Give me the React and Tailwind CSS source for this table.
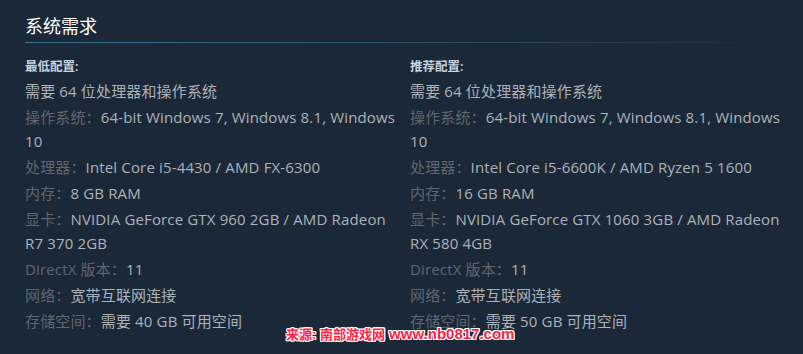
import React from 'react'

const minimum = [
  ['操作系统：', '64-bit Windows 7, Windows 8.1, Windows 10'],
  ['处理器：', 'Intel Core i5-4430 / AMD FX-6300'],
  ['内存：', '8 GB RAM'],
  ['显卡：', 'NVIDIA GeForce GTX 960 2GB / AMD Radeon R7 370 2GB'],
  ['DirectX 版本：', '11'],
  ['网络：', '宽带互联网连接'],
  ['存储空间：', '需要 40 GB 可用空间'],
]

const recommended = [
  ['操作系统：', '64-bit Windows 7, Windows 8.1, Windows 10'],
  ['处理器：', 'Intel Core i5-6600K / AMD Ryzen 5 1600'],
  ['内存：', '16 GB RAM'],
  ['显卡：', 'NVIDIA GeForce GTX 1060 3GB / AMD Radeon RX 580 4GB'],
  ['DirectX 版本：', '11'],
  ['网络：', '宽带互联网连接'],
  ['存储空间：', '需要 50 GB 可用空间'],
]

function ReqColumn({ title, rows }) {
  return (
    <div className="w-[375px]">
      <div className="mt-[14px] text-[12.5px] leading-[20px] font-semibold text-[#c6d4df]">{title}</div>
      <ul className="mt-[2px] text-[15px] leading-[24px] tracking-[0.15px] text-[#acb2b8]">
        <li className="mb-[2px]">需要 64 位处理器和操作系统</li>
        {rows.map(([label, value]) => (
          <li key={label} className="mb-[2px]">
            <span className="text-[#5f666e]">{label}</span>
            {value}
          </li>
        ))}
      </ul>
    </div>
  )
}

export default function App() {
  return (
    <div
      className="relative w-[803px] h-[354px] overflow-hidden bg-[#1b2838] pl-[25px] pr-[18px]"
      style={{ fontFamily: '"Open Sans", "Noto Sans CJK SC", sans-serif' }}
    >
      <h2 className="pt-[14px] pb-[4px] text-[18px] leading-[24px] text-white font-normal">系统需求</h2>
      <div className="h-px bg-gradient-to-r from-[#3d7192] via-[#2c5069] to-transparent" />

      <div className="flex gap-[10px]">
        <ReqColumn title="最低配置:" rows={minimum} />
        <ReqColumn title="推荐配置:" rows={recommended} />
      </div>

      {/* watermark */}
      <div
        className="absolute left-[286px] top-[324px] font-bold text-[15px] leading-[20px] text-[#ff1f44] whitespace-nowrap [text-shadow:1px_0_0_#fff,-1px_0_0_#fff,0_1px_0_#fff,0_-1px_0_#fff,1px_1px_0_#fff,-1px_-1px_0_#fff,1px_-1px_0_#fff,-1px_1px_0_#fff]"
        style={{ fontFamily: '"Liberation Sans", "Noto Sans CJK SC", sans-serif' }}
      >
        <span className="text-[13px]">来源: 南部游戏网</span> www.nb0817.com
      </div>
    </div>
  )
}
